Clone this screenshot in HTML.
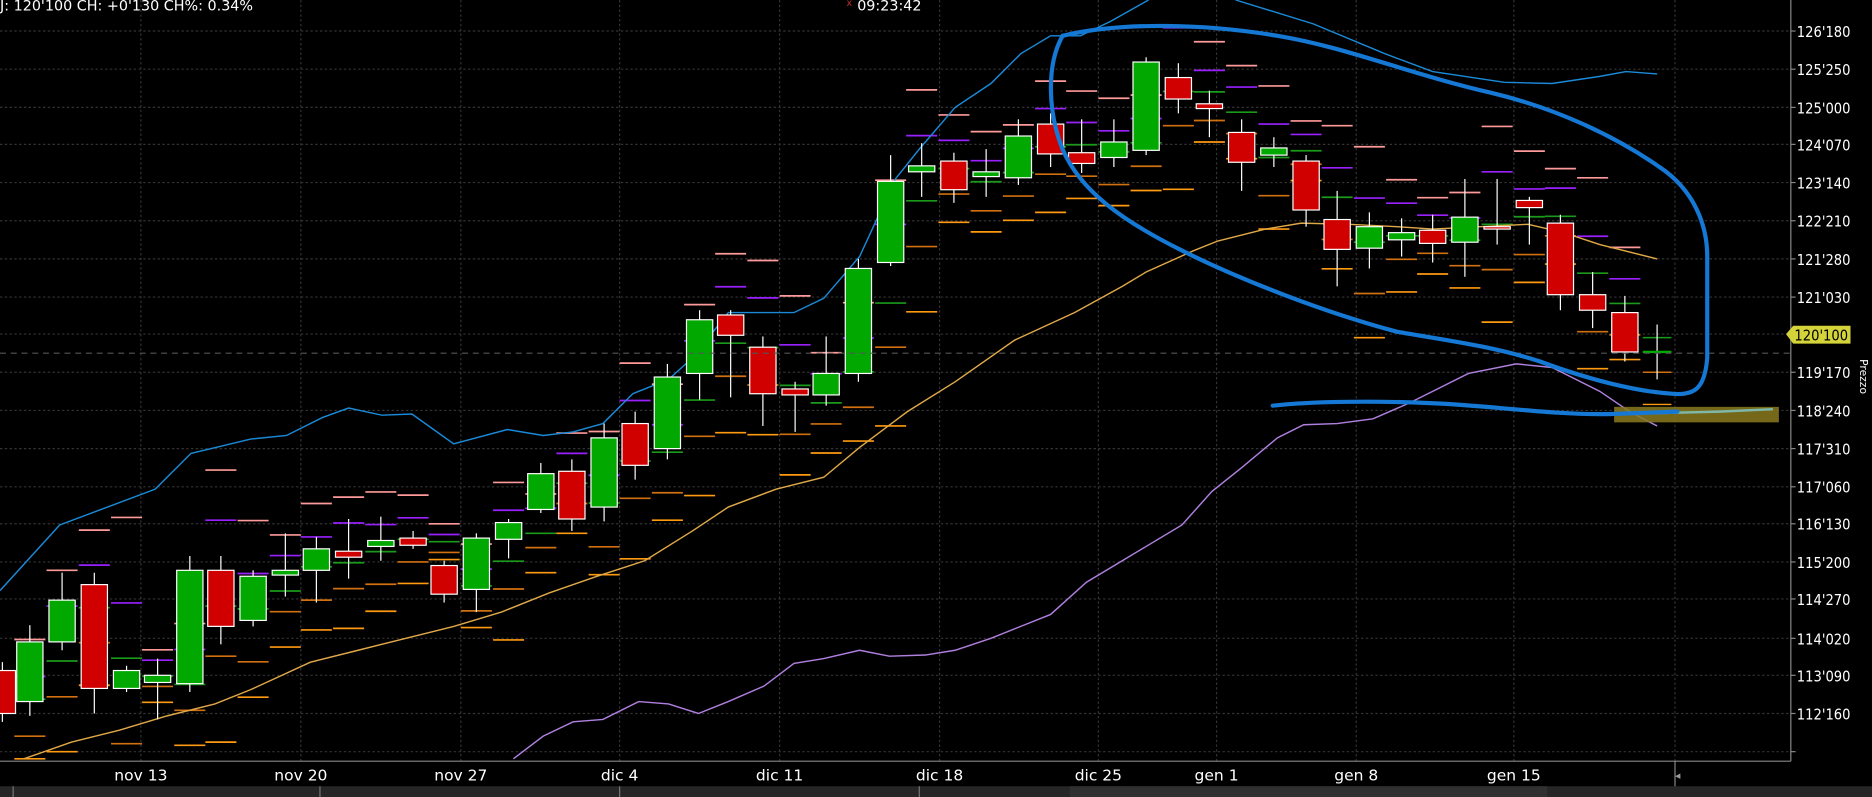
<!DOCTYPE html>
<html><head><meta charset="utf-8"><style>
html,body{margin:0;padding:0;background:#000;overflow:hidden}
svg{display:block}
text{font-family:"DejaVu Sans","Liberation Sans",sans-serif}
</style></head><body>
<svg id="s" width="1872" height="797" viewBox="0 0 1568 668" preserveAspectRatio="none" xmlns="http://www.w3.org/2000/svg">
<rect width="1568" height="668" fill="#000"/>
<g id="grid" stroke="#333" stroke-width="1" stroke-dasharray="2,2"></g>
<g id="piv"></g>
<polyline fill="none" stroke="#1a8ad8" stroke-width="1.2" points="0,495 50,440 90,425 130,410 160,380 210,368 240,365 270,350 292,342 320,348 345,347 380,372 425,360 455,365 480,362 505,355 530,330 560,318 580,300 610,262 640,262 665,262 690,250 720,215 750,150 770,125 800,90 830,70 855,45 880,30 905,30 930,18 962,0"/>
<polyline fill="none" stroke="#1a8ad8" stroke-width="1.2" points="1035,0 1100,20 1160,45 1200,60 1260,69 1300,70 1340,64 1362,60 1388,62"/>
<polyline fill="none" stroke="#e0a848" stroke-width="1.2" points="20,636 60,622 100,612 140,600 180,590 210,578 260,555 300,545 340,535 380,525 420,513 460,497 500,483 540,470 580,445 610,425 650,410 690,400 720,375 760,345 800,320 850,285 900,262 940,240 960,228 1000,210 1020,202 1060,192 1090,187 1130,188 1170,190 1200,192 1240,190 1280,188 1310,195 1340,205 1388,217"/>
<polyline fill="none" stroke="#b080e0" stroke-width="1.2" points="430,636 455,617 480,605 505,603 535,588 560,590 585,598 610,588 640,575 665,556 690,552 720,545 745,550 775,549 800,545 830,535 855,525 880,515 910,488 940,470 960,458 990,440 1015,412 1040,392 1070,367 1092,356 1120,355 1150,351 1180,338 1200,328 1230,313 1270,305 1300,308 1320,318 1340,328 1365,345 1388,357"/>
<g id="cdl"></g>
<line x1="0" y1="296" x2="1500" y2="296" stroke="#555" stroke-dasharray="5,4"/>
<rect x="1352" y="341" width="138" height="13" fill="#8a7a20" opacity="0.85"/>
<polyline fill="none" stroke="#7fb8a8" stroke-width="2" points="1355,347 1400,346 1440,345 1485,343"/>
<path fill="none" stroke="#1478d4" stroke-width="3.5" stroke-linecap="round" d="M890,30 C940,18 1010,20 1070,30 C1130,40 1180,62 1250,78 C1300,90 1350,112 1390,140 C1420,160 1430,190 1430,215 L1430,300 C1428,325 1420,332 1400,330 C1370,328 1330,318 1290,303 C1250,290 1210,285 1170,278 C1110,262 1040,235 990,210 C940,185 905,160 890,125 C878,95 876,55 890,30 Z"/>
<path fill="none" stroke="#1478d4" stroke-width="3.5" stroke-linecap="round" d="M1066,340 C1100,336 1160,336 1200,338 C1250,340 1300,348 1350,347 L1405,345"/>
<line x1="1500" y1="0" x2="1500" y2="638" stroke="#888"/>
<line x1="0" y1="638" x2="1500" y2="638" stroke="#888"/>
<line x1="1403" y1="638" x2="1403" y2="660" stroke="#888"/>
<text x="1403" y="653" fill="#999" font-size="9">◂</text>
<g id="ax" fill="#fff" font-size="12.5"></g>
<g fill="#fff" font-size="13" text-anchor="middle" font-family="Liberation Sans Narrow,Liberation Sans,sans-serif">
<text x="118" y="654">nov 13</text><text x="252" y="654">nov 20</text><text x="386" y="654">nov 27</text><text x="519" y="654">dic 4</text><text x="653" y="654">dic 11</text><text x="787" y="654">dic 18</text><text x="920" y="654">dic 25</text><text x="1019" y="654">gen 1</text><text x="1136" y="654">gen 8</text><text x="1268" y="654">gen 15</text>
</g>
<rect x="0" y="659" width="1568" height="9" fill="#262626"/>
<g stroke="#777"><line x1="11" y1="659" x2="11" y2="668"/><line x1="268" y1="659" x2="268" y2="668"/><line x1="519" y1="659" x2="519" y2="668"/><line x1="770" y1="659" x2="770" y2="668"/><line x1="1290" y1="659" x2="1290" y2="668"/></g>
<rect x="896" y="659" width="400" height="9" fill="#303030"/>
<path d="M1496,280 L1502,273 L1550,273 L1550,288 L1502,288 Z" fill="#d4d43a"/>
<text x="1503" y="285.5" fill="#000" font-size="12.5" textLength="45" lengthAdjust="spacingAndGlyphs">120'100</text>
<text x="1558" y="301" fill="#fff" font-size="9" transform="rotate(90 1558 301)">Prezzo</text>
<text x="0" y="9" fill="#fff" font-size="12" font-family="Liberation Sans Narrow,Liberation Sans,sans-serif">J: 120'100 CH: +0'130 CH%: 0.34%</text>
<text x="709" y="5" fill="#c03030" font-size="8">x</text>
<text x="718" y="9" fill="#fff" font-size="12" font-family="Liberation Sans Narrow,Liberation Sans,sans-serif">09:23:42</text>
</svg>
<script>
var NS="http://www.w3.org/2000/svg";
function el(p,t,a){var e=document.createElementNS(NS,t);for(var k in a)e.setAttribute(k,a[k]);p.appendChild(e);return e;}
var g=document.getElementById('grid'),ax=document.getElementById('ax');
var labs=[["126'180",26],["125'250",58],["125'000",90],["124'070",121],["123'140",153],["122'210",185],["121'280",217],["121'030",249],["119'170",312],["118'240",344],["117'310",376],["117'060",408],["116'130",439],["115'200",471],["114'270",502],["114'020",535],["113'090",566],["112'160",598],["",630]];
labs.forEach(function(l){el(g,'line',{x1:0,y1:l[1],x2:1500,y2:l[1]});el(ax,'line',{x1:1500,y1:l[1],x2:1504,y2:l[1],stroke:'#888'});if(l[0]){var t=el(ax,'text',{x:1505,y:l[1]+5,textLength:45,lengthAdjust:'spacingAndGlyphs'});t.textContent=l[0];}});
el(g,'line',{x1:0,y1:280,x2:1500,y2:280});
[118,252,386,519,653,787,920,1019,1136,1268,1403].forEach(function(x){el(g,'line',{x1:x,y1:0,x2:x,y2:638});});
var C=[[2,562,598,555,605],[25,588,538,524,600],[52,538,503,480,545],[79,490,577,480,598],[106,577,562,558,580],[132,572,566,552,603],[159,573,478,466,580],[185,478,525,466,540],[212,520,483,478,525],[239,482,478,447,500],[265,478,460,450,505],[292,462,467,435,485],[319,458,453,433,470],[346,451,457,445,460],[372,474,498,470,505],[399,494,451,447,513],[426,452,438,435,468],[453,427,397,388,430],[479,395,435,385,445],[506,425,367,355,437],[532,355,390,345,402],[559,376,316,305,385],[586,313,268,260,335],[612,264,281,260,333],[639,291,330,282,357],[666,326,331,320,362],[692,331,313,282,340],[719,313,225,217,320],[746,220,152,130,223],[772,144,139,120,165],[799,135,159,128,170],[826,148,144,125,165],[853,149,114,100,155],[880,104,129,95,140],[906,128,137,100,145],[933,132,119,100,140],[960,126,52,48,130],[987,65,83,53,95],[1013,87,91,76,115],[1040,111,136,100,160],[1067,130,124,115,140],[1094,135,176,130,190],[1120,184,209,160,240],[1147,208,190,178,225],[1174,201,195,183,215],[1200,193,204,180,220],[1227,203,182,150,232],[1254,190,190,150,205],[1281,168,174,165,205],[1307,187,247,180,260],[1334,247,260,228,275],[1361,262,295,248,303]];
var cg=document.getElementById('cdl'),pg=document.getElementById('piv');
C.forEach(function(c,i){
  var x=c[0],o=c[1],cl=c[2],h=c[3],l=c[4];
  if(i>0){var p=C[i-1];var H=p[3],L=p[4],Cc=p[2];var P=(H+L+Cc)/3,R1=2*P-L,S1=2*P-H,R2=P+(H-L),S2=P-(H-L);
    [[R2,'#ff9a9a'],[R1,'#9a20ff'],[P,'#1a9a1a'],[S1,'#d07010'],[S2,'#ff9a10']].forEach(function(q){el(pg,'line',{x1:x-13,x2:x+13,y1:q[0],y2:q[0],stroke:q[1],'stroke-width':1.4});});}
  el(cg,'line',{x1:x,x2:x,y1:h,y2:l,stroke:'#fff','stroke-width':1});
  var top=Math.min(o,cl),bh=Math.max(Math.abs(o-cl),2);
  el(cg,'rect',{x:x-11,y:top,width:22,height:bh,fill:cl<o?'#00a800':'#d00000',stroke:'#fff','stroke-width':1});
});
el(cg,'line',{x1:1388,x2:1388,y1:272,y2:318,stroke:'#fff'});
el(cg,'line',{x1:1376,x2:1400,y1:295,y2:295,stroke:'#00b000','stroke-width':2});
el(pg,'line',{x1:1376,x2:1400,y1:283,y2:283,stroke:'#1a9a1a','stroke-width':1.2});
el(pg,'line',{x1:1376,x2:1400,y1:312,y2:312,stroke:'#d07010','stroke-width':1.2});
el(pg,'line',{x1:1376,x2:1400,y1:339,y2:339,stroke:'#ff9a10','stroke-width':1.2});
</script>
</body></html>
